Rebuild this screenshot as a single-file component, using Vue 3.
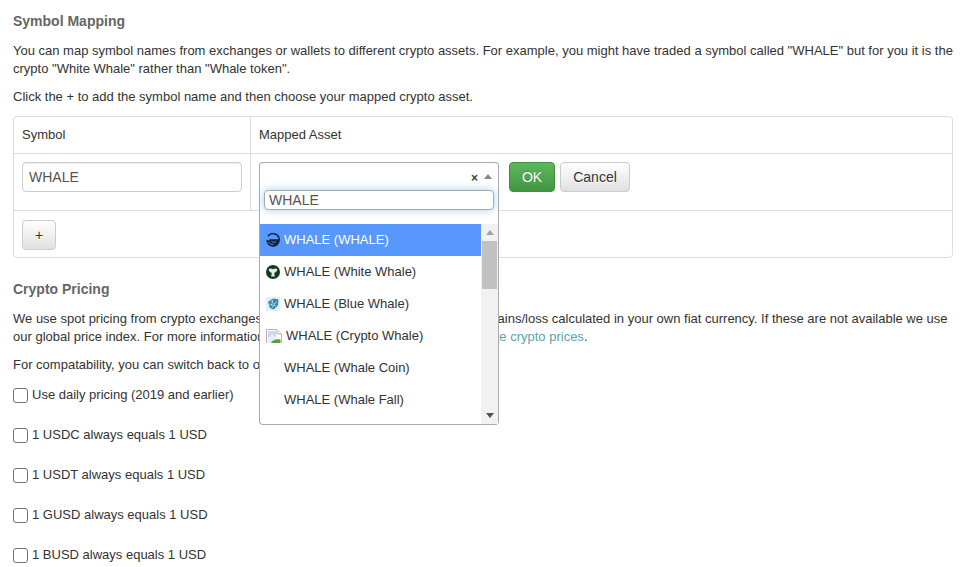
<script setup>
const options = [
  { label: 'WHALE (WHALE)', icon: 'whale', active: true },
  { label: 'WHALE (White Whale)', icon: 'white' },
  { label: 'WHALE (Blue Whale)', icon: 'blue' },
  { label: 'WHALE (Crypto Whale)', icon: 'broken' },
  { label: 'WHALE (Whale Coin)', icon: '' },
  { label: 'WHALE (Whale Fall)', icon: '' },
]
const checks = [
  'Use daily pricing (2019 and earlier)',
  '1 USDC always equals 1 USD',
  '1 USDT always equals 1 USD',
  '1 GUSD always equals 1 USD',
  '1 BUSD always equals 1 USD',
]
</script>

<template>
  <div class="page">
    <h4 class="title">Symbol Mapping</h4>
    <p class="para first">You can map symbol names from exchanges or wallets to different crypto assets. For example, you might have traded a symbol called "WHALE" but for you it is the crypto "White Whale" rather than "Whale token".</p>
    <p class="para click">Click the + to add the symbol name and then choose your mapped crypto asset.</p>

    <div class="table">
      <div class="row head">
        <div class="cell c1">Symbol</div>
        <div class="cell">Mapped Asset</div>
      </div>
      <div class="row body">
        <div class="cell c1"><input class="input" value="WHALE" /></div>
        <div class="cell assets">
          <div class="select">
            <div class="select-box">
              <span class="clear">×</span>
              <span class="caret"></span>
            </div>
            <div class="drop">
              <div class="search-wrap"><input class="search" value="WHALE" /></div>
              <div class="results">
                <ul class="list">
                  <li v-for="o in options" :key="o.label" class="opt" :class="{ active: o.active }">
                    <span class="ico" :class="{ wide: o.icon === 'broken' }">
                      <svg v-if="o.icon === 'whale'" viewBox="0 0 14 14" width="14" height="14">
                        <path d="M2 3.2 A6.2 6.2 0 0 1 13.2 7" fill="none" stroke="#10233f" stroke-width="1.5" />
                        <path d="M3.5 6.2 H13.8 C14 10.8 10.6 13.8 7 13.8 C3.4 13.8 0.4 11 0.3 6.8 L3 7.6 C3.2 7 3.2 6.6 3.5 6.2Z" fill="#10233f" />
                        <path d="M2.4 9 C3.6 11 5.4 11.8 7.4 11.4 M5.6 8.4 C6.8 9.6 8.4 9.6 10 8.4" fill="none" stroke="#5b96fb" stroke-width="0.9" />
                      </svg>
                      <svg v-else-if="o.icon === 'white'" viewBox="0 0 14 14" width="14" height="14">
                        <circle cx="7" cy="7" r="7" fill="#0f3d1c" />
                        <path d="M2.6 4.2 C4.4 3 5.8 3.4 7 4.2 C8.2 3.4 9.6 3 11.4 4.2 C11.2 6.4 9.4 7.4 8.2 7.8 L8.8 11.6 H5.2 L5.8 7.8 C4.6 7.4 2.8 6.4 2.6 4.2Z" fill="#e8e8e8" />
                      </svg>
                      <svg v-else-if="o.icon === 'blue'" viewBox="0 0 14 14" width="14" height="14">
                        <rect width="14" height="14" fill="#d8f4f8" />
                        <path d="M2 5 L7 1.5 L12.5 2.5 L12 8 L8 12.5 L4 11 Z" fill="#3f7f9f" />
                        <path d="M5 4 L9 7 M7 2.5 L5.5 9 M11 4 L6 11 M3 7 L10 9" stroke="#a6d4e4" stroke-width="0.9" />
                      </svg>
                      <svg v-else-if="o.icon === 'broken'" viewBox="0 0 16 14" width="16" height="14">
                        <path d="M0.5 14 V0.5 H11 L15.5 5 V14" fill="#fff" stroke="#b5b5b5" />
                        <path d="M11 0.5 V5 H15.5" fill="#eee" stroke="#b5b5b5" />
                        <rect x="2" y="2" width="8" height="11" fill="#c9d9f2" />
                        <path d="M2 9 L6 5 L11 9 V14 H2 Z" fill="#e6eefa" />
                        <path d="M5 14 C6 11 10 9.5 14.5 10.5 V14 Z" fill="#4fa63a" />
                      </svg>
                    </span>
                    <span>{{ o.label }}</span>
                  </li>
                </ul>
                <div class="scrollbar">
                  <span class="arrow up"></span>
                  <div class="track"><div class="thumb"></div></div>
                  <span class="arrow down"></span>
                </div>
              </div>
            </div>
          </div>
          <button class="btn ok">OK</button>
          <button class="btn cancel">Cancel</button>
        </div>
      </div>
      <div class="row foot">
        <button class="btn plus">+</button>
      </div>
    </div>

    <h4 class="title pricing">Crypto Pricing</h4>
    <p class="para first">We use spot pricing from crypto exchanges to give you more accurate values, with gains/loss calculated in your own fiat currency. If these are not available we use our global price index. For more information on this see our page on <a class="link">how we calculate crypto prices</a>.</p>
    <p class="para compat">For compatability, you can switch back to our older daily pricing using this option <a class="link-dark">.</a></p>

    <label v-for="c in checks" :key="c" class="check"><span class="box"></span>{{ c }}</label>
  </div>
</template>

<style scoped>
.page {
  box-sizing: border-box;
  width: 969px;
  height: 567px;
  overflow: hidden;
  padding: 12px 16px 0 13px;
  font-family: "Liberation Sans", Arial, sans-serif;
  font-size: 13px;
  line-height: 18px;
  color: #333;
  background: #fff;
}
.title {
  margin: 0;
  font-size: 14px;
  line-height: 18px;
  font-weight: 700;
  color: #666;
}
.para { margin: 0; }
.first { margin-top: 12px; }
.click { margin-top: 10px; }
.table {
  margin-top: 10px;
  border: 1px solid #ddd;
  border-radius: 4px;
  width: 940px;
  box-sizing: border-box;
}
.row { display: flex; }
.head { height: 37px; border-bottom: 1px solid #ddd; box-sizing: border-box; }
.head .cell { line-height: 35px; }
.body { height: 57px; border-bottom: 1px solid #ddd; box-sizing: border-box; }
.foot { height: 46px; padding: 9px 8px; box-sizing: border-box; }
.c1 { width: 237px; flex: none; border-right: 1px solid #ddd; box-sizing: border-box; padding: 0 8px; }
.cell { padding-left: 8px; }
.body .cell { padding-top: 8px; }
.assets { display: flex; align-items: flex-start; gap: 5px; }
.input {
  box-sizing: border-box;
  width: 220px;
  height: 30px;
  border: 1px solid #ccc;
  border-radius: 4px;
  padding: 0 6px;
  font: 14px "Liberation Sans", Arial, sans-serif;
  color: #555;
  box-shadow: inset 0 1px 1px rgba(0,0,0,.075);
  outline: none;
}
.select { position: relative; width: 240px; height: 30px; margin-right: 5px; }
.select-box {
  box-sizing: border-box;
  height: 30px;
  border: 1px solid #aaa;
  border-bottom: 0;
  border-radius: 4px 4px 0 0;
  background: #fff;
  position: relative;
}
.clear {
  position: absolute;
  right: 20px;
  top: 6px;
  font-size: 12px;
  font-weight: 700;
  color: #444;
}
.caret {
  position: absolute;
  right: 6px;
  top: 11px;
  border-left: 4px solid transparent;
  border-right: 4px solid transparent;
  border-bottom: 5px solid #888;
}
.drop {
  position: absolute;
  z-index: 5;
  left: 0;
  top: 28px;
  box-sizing: border-box;
  width: 240px;
  height: 235px;
  background: #fff;
  border: 1px solid #aaa;
  border-top: 0;
  border-radius: 0 0 4px 4px;
}
.search-wrap { padding: 0 4px; height: 34px; box-sizing: border-box; }
.search {
  display: block;
  box-sizing: border-box;
  width: 230px;
  height: 20px;
  border: 1px solid #aaa;
  border-radius: 4px;
  padding: 0 4px;
  font: 14px "Liberation Sans", Arial, sans-serif;
  color: #555;
  outline: none;
  box-shadow: 0 0 8px rgba(102,175,233,.6);
}
.results { display: flex; height: 200px; }
.list { list-style: none; margin: 0; padding: 0; flex: 1; min-width: 0; }
.opt { height: 32px; display: flex; align-items: center; padding-left: 6px; color: #333; }
.opt.active { background: #5897fb; color: #fff; }
.ico { width: 18px; height: 14px; flex: none; }
.ico.wide { width: 20px; }
.ico svg { display: block; }
.scrollbar {
  width: 17px;
  flex: none;
  background: #f1f1f1;
  display: flex;
  flex-direction: column;
  align-items: center;
}
.arrow { width: 0; height: 0; border-left: 4px solid transparent; border-right: 4px solid transparent; margin: 6px 0; }
.up { border-bottom: 5px solid #a3a3a3; }
.down { border-top: 5px solid #505050; }
.track { flex: 1; width: 100%; }
.thumb { width: 15px; height: 48px; background: #c1c1c1; margin-left: 1px; }
.btn {
  box-sizing: border-box;
  height: 30px;
  border-radius: 4px;
  font: 14px "Liberation Sans", Arial, sans-serif;
  padding: 0;
  text-shadow: 0 1px 0 #fff;
}
.ok {
  width: 46px;
  border: 1px solid #3e8f3e;
  background: linear-gradient(#5cb85c, #419641);
  color: #fff;
  text-shadow: 0 -1px 0 rgba(0,0,0,.2);
}
.cancel {
  width: 70px;
  border: 1px solid #ccc;
  background: linear-gradient(#fff, #e0e0e0);
  color: #333;
}
.plus {
  width: 34px;
  border: 1px solid #ccc;
  background: linear-gradient(#fff, #e0e0e0);
  color: #333;
}
.pricing { margin-top: 22px; }
.compat { margin-top: 10px; }
.link { color: #5ba4ad; }
.link-dark { color: #337ab7; }
.check { display: flex; align-items: center; height: 18px; margin-top: 22px; }
.compat + .check { margin-top: 12px; }
.box {
  box-sizing: border-box;
  width: 15px;
  height: 15px;
  border: 1px solid #767676;
  border-radius: 3px;
  margin-right: 4px;
  background: #fff;
  flex: none;
}
</style>
